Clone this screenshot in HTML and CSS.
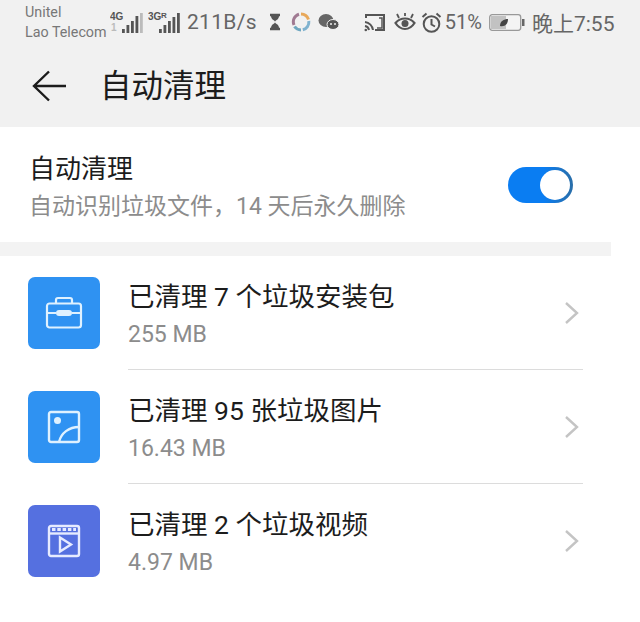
FILE: index.html
```html
<!DOCTYPE html>
<html lang="zh-CN">
<head>
<meta charset="utf-8">
<title>自动清理</title>
<link rel="stylesheet" href="styles.css">
</head>
<body>
<header class="top">
  <div class="status">
    <div class="carrier"><span>Unitel</span><span>Lao Telecom</span></div>
    <div class="sig sig-a">
      <svg width="34" height="26" viewBox="0 0 34 26"><text x="0" y="11" class="tiny">4G</text><text x="1" y="22" class="tiny faint">1</text><g fill="#555"><rect x="12" y="20" width="2.800" height="4"/><rect x="16.500" y="16" width="2.800" height="8"/><rect x="21" y="12" width="2.800" height="12"/><rect x="25.500" y="7" width="2.800" height="17"/></g><rect x="30" y="4" width="2.800" height="20" fill="#bbb"/></svg>
    </div>
    <div class="sig sig-b">
      <svg width="34" height="26" viewBox="0 0 34 26"><text x="0" y="11" class="tiny">3G</text><text x="13" y="9" class="tiny mini">R</text><g fill="#555"><rect x="11" y="20" width="2.800" height="4"/><rect x="15.500" y="16" width="2.800" height="8"/><rect x="20" y="12" width="2.800" height="12"/><rect x="24.500" y="8" width="2.800" height="16"/><rect x="29" y="4" width="2.800" height="20"/></g></svg>
    </div>
    <span class="speed">211B/s</span>
    <svg class="i-glass" width="14" height="18" viewBox="0 0 14 18"><path d="M2 2h10M2 16h10" stroke="#555" stroke-width="2.400"/><path d="M3 3c0 4 4 4 4 6 0-2 4-2 4-6zM7 9c0 2-4 2-4 6h8c0-4-4-4-4-6z" fill="#555"/></svg>
    <svg class="i-ring" width="20" height="20" viewBox="0 0 20 20" fill="none" stroke-width="3"><path d="M10 2a8 8 0 0 1 7.500 5.500" stroke="#e8a85a"/><path d="M17.800 9a8 8 0 0 1-6 8.800" stroke="#7fb2cf"/><path d="M10 18a8 8 0 0 1-6.500-3.500" stroke="#6fa7c0"/><path d="M3 13a8 8 0 0 1 5-10.800" stroke="#a07a92"/></svg>
    <svg class="i-chat" width="22" height="18" viewBox="0 0 22 18"><ellipse cx="8" cy="7.500" rx="7.500" ry="6.500" fill="#666"/><ellipse cx="15" cy="11.500" rx="6" ry="5" fill="#555" stroke="#f1f1f1"/><circle cx="13" cy="11" r="1" fill="#f1f1f1"/><circle cx="17" cy="11" r="1" fill="#f1f1f1"/></svg>
    <svg class="i-cast" width="22" height="19" viewBox="0 0 22 19" fill="none" stroke="#555" stroke-width="2"><path d="M2 5V2h18v15h-9"/><path d="M1 9a9 9 0 0 1 8 8M1 13a5 5 0 0 1 4 4"/><circle cx="1.800" cy="17" r="1.300" fill="#555" stroke="none"/><path d="M15 5h3v10h-5" stroke-width="1.500"/></svg>
    <svg class="i-eye" width="22" height="19" viewBox="0 0 22 19" fill="none" stroke="#555"><path d="M1.500 10c5-6 14-6 19 0-5 8-14 8-19 0z" stroke-width="2.200"/><circle cx="11" cy="10.500" r="3.500" fill="#555" stroke="none"/><path d="M3 1l2 4M11 0v3M19 1l-2 4" stroke-width="1.800"/></svg>
    <svg class="i-clock" width="21" height="21" viewBox="0 0 21 21" fill="none" stroke="#555" stroke-width="2"><circle cx="10.500" cy="12" r="7.800"/><path d="M10.500 7v5.500l3.500 2M1.500 5l4-3.500M19.500 5l-4-3.500"/></svg>
    <span class="pct">51%</span>
    <svg class="i-batt" width="36" height="17" viewBox="0 0 36 17"><rect x="0.700" y="0.700" width="31" height="15.600" rx="2.500" fill="#f4f4f4" stroke="#999" stroke-width="1.300"/><rect x="2" y="2" width="15" height="13" fill="#c2c2c2"/><path d="M11 12c0-5 4-7 8-7 0 5-3 8-8 7z" fill="#444"/><rect x="33" y="5" width="2.500" height="7" fill="#666"/></svg>
    <span class="clock">晚上7:55</span>
  </div>
  <div class="toolbar">
    <svg class="back" width="34" height="32" viewBox="0 0 34 32" fill="none" stroke="#1c1c1c" stroke-width="2.400"><path d="M17 1.500L2 16l15 14.500M2 16h32"/></svg>
    <h1 class="title">自动清理</h1>
  </div>
</header>
<section class="setting">
  <div class="setting-text">
    <div class="setting-title">自动清理</div>
    <div class="setting-sub">自动识别垃圾文件，14 天后永久删除</div>
  </div>
  <div class="switch"><span class="knob"></span></div>
</section>
<div class="gap"></div>
<ul class="list">
  <li class="row">
    <span class="tile tile-blue">
      <svg width="38" height="34" viewBox="0 0 38 34" fill="none" stroke="#dff1ff" stroke-width="2.200"><rect x="2" y="7.500" width="34" height="24" rx="2.500"/><path d="M11 7V4a2 2 0 0 1 2-2h12a2 2 0 0 1 2 2v3"/><path d="M2 17h9M27 17h9"/><rect x="11" y="14" width="16" height="6" rx="3" fill="#dff1ff" stroke="none"/></svg>
    </span>
    <div class="row-body">
      <div class="row-text">
        <div class="row-title">已清理 7 个垃圾安装包</div>
        <div class="row-sub">255 MB</div>
      </div>
      <svg class="chev" width="16" height="24" viewBox="0 0 16 24" fill="none" stroke="#c4c4c4" stroke-width="2.400"><path d="M2 2l11 10L2 22"/></svg>
    </div>
  </li>
  <li class="row">
    <span class="tile tile-blue">
      <svg width="34" height="34" viewBox="0 0 34 34" fill="none" stroke="#dff1ff" stroke-width="2.400"><rect x="2" y="2" width="30" height="30" rx="2"/><circle cx="10.500" cy="10.500" r="3.500" fill="#dff1ff" stroke="none"/><path d="M12 32c2-9 10-15 20-15"/></svg>
    </span>
    <div class="row-body">
      <div class="row-text">
        <div class="row-title">已清理 95 张垃圾图片</div>
        <div class="row-sub">16.43 MB</div>
      </div>
      <svg class="chev" width="16" height="24" viewBox="0 0 16 24" fill="none" stroke="#c4c4c4" stroke-width="2.400"><path d="M2 2l11 10L2 22"/></svg>
    </div>
  </li>
  <li class="row">
    <span class="tile tile-violet">
      <svg width="34" height="34" viewBox="0 0 34 34" fill="none" stroke="#e6ebff" stroke-width="2.400"><rect x="2" y="2" width="30" height="30" rx="2"/><path d="M2 9.500h30"/><path d="M5 5.500h24" stroke-width="3" stroke-dasharray="3.500 1.800"/><path d="M13 13.500l11 7-11 7z"/></svg>
    </span>
    <div class="row-body">
      <div class="row-text">
        <div class="row-title">已清理 2 个垃圾视频</div>
        <div class="row-sub">4.97 MB</div>
      </div>
      <svg class="chev" width="16" height="24" viewBox="0 0 16 24" fill="none" stroke="#c4c4c4" stroke-width="2.400"><path d="M2 2l11 10L2 22"/></svg>
    </div>
  </li>
</ul>
</body>
</html>
```
FILE: styles.css
```css
* { box-sizing: border-box; }
html, body { margin: 0; padding: 0; }
body {
  width: 640px;
  height: 622px;
  overflow: hidden;
  background: #fff;
  font-family: Roboto, "Noto Sans CJK SC", sans-serif;
  color: #1c1c1c;
}
.top { background: #f1f1f1; height: 127px; }
.status {
  height: 44px;
  display: flex;
  align-items: center;
  padding-left: 25px;
  color: #666;
}
.carrier {
  width: 84px;
  display: flex;
  flex-direction: column;
  font-size: 14.300px;
  line-height: 20px;
  color: #777;
  white-space: nowrap;
}
.sig { height: 26px; margin-left: 1px; }
.sig svg { display: block; }
.sig-b { margin-left: 4px; }
.tiny { font: bold 10px "Liberation Sans", sans-serif; fill: #555; }
.mini { font-size: 8px; }
.faint { fill: #bbb; }
.speed { font-size: 21px; margin-left: 5px; letter-spacing: 0.300px; }
.i-glass { margin-left: 11px; }
.i-ring { margin-left: 9px; }
.i-chat { margin-left: 7px; }
.i-cast { margin-left: 24px; }
.i-eye { margin-left: 8px; }
.i-clock { margin-left: 5px; }
.pct { font-size: 20px; margin-left: 3px; }
.i-batt { margin-left: 7px; }
.clock { font-size: 21px; margin-left: 7px; white-space: nowrap; }
.toolbar {
  display: flex;
  align-items: center;
  height: 83px;
  padding-left: 32px;
}
.back { flex: none; }
.title {
  margin: 0 0 0 34px;
  padding-top: 3px;
  font-size: 31.500px;
  font-weight: 400;
  line-height: 40px;
}
.setting {
  height: 115px;
  display: flex;
  align-items: center;
  justify-content: space-between;
  padding: 0 67px 0 29px;
}
.setting-text { padding-top: 7px; }
.setting-title { font-size: 26px; line-height: 36px; }
.setting-sub { font-size: 23px; line-height: 36px; color: #8c8c8c; margin-top: 2px; white-space: nowrap; }
.switch {
  width: 65px;
  height: 36px;
  border-radius: 18px;
  background: linear-gradient(90deg, #0a7df2 55%, #2a6ea8);
  padding: 3px;
  display: flex;
  justify-content: flex-end;
}
.knob {
  width: 30px;
  height: 30px;
  border-radius: 50%;
  background: #fff;
}
.gap { height: 14px; width: 611px; background: #f3f3f3; }
.list { margin: 0; padding: 0 0 0 28px; list-style: none; }
.row { display: flex; height: 114px; }
.tile {
  flex: none;
  width: 72px;
  height: 72px;
  margin-top: 21px;
  border-radius: 7px;
  display: flex;
  align-items: center;
  justify-content: center;
}
.tile-blue { background: #2f92f2; }
.tile-violet { background: #5570e0; }
.row-body {
  width: 455px;
  margin-left: 28px;
  display: flex;
  justify-content: space-between;
  align-items: center;
  border-bottom: 1px solid #dcdcdc;
  padding-right: 3px;
}
.row:last-child .row-body { border-bottom: none; }
.row-text { padding-top: 3px; }
.row-title { font-size: 26.500px; line-height: 38px; white-space: nowrap; }
.row-sub { font-size: 23px; line-height: 32px; color: #8c8c8c; margin-top: 3px; }
.chev { flex: none; }
```
